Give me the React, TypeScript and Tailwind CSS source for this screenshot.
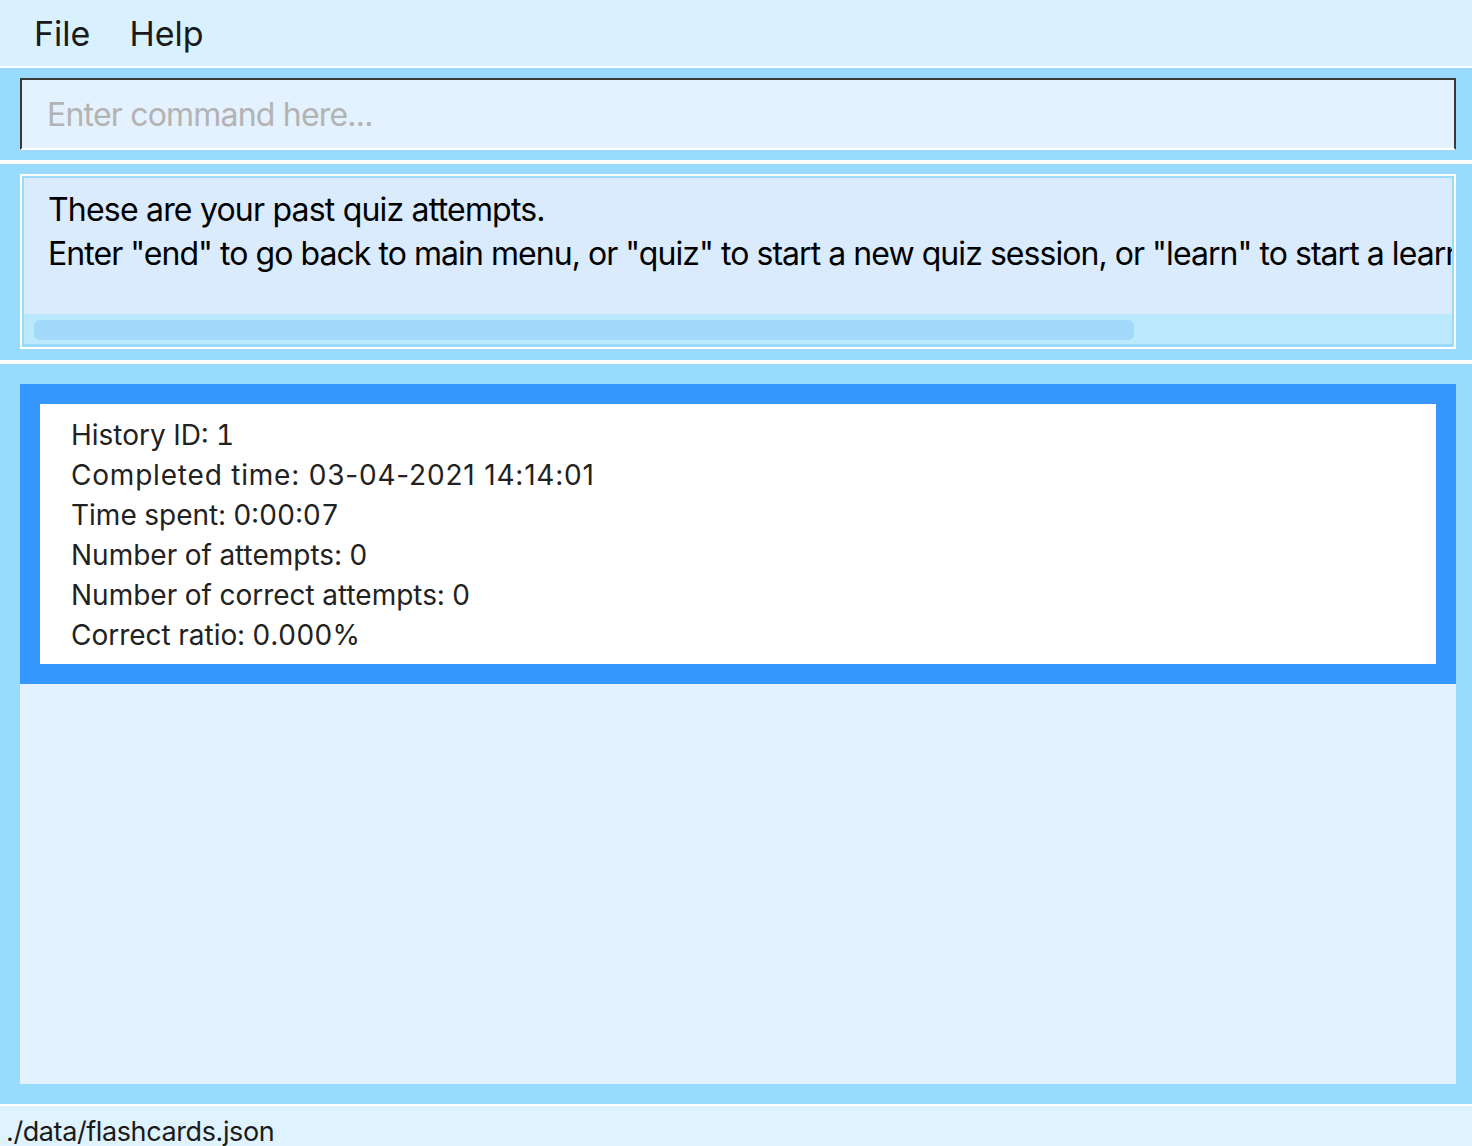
import React from 'react';

const font = { fontFamily: 'Inter, "Noto Sans", sans-serif' };

const history = [
  'History ID: 1',
  'Completed time: 03-04-2021 14:14:01',
  'Time spent: 0:00:07',
  'Number of attempts: 0',
  'Number of correct attempts: 0',
  'Correct ratio: 0.000%',
];

function MenuBar() {
  return (
    <div className="flex h-[66px] items-center bg-[#d9f0ff] text-[34px] text-[#1a1a1a]">
      <span className="ml-[34px]">File</span>
      <span className="ml-[39px]">Help</span>
    </div>
  );
}

function CommandBox() {
  return (
    <div className="bg-[#99dbfd] pb-[10px] pl-[20px] pr-[16px] pt-[10px]">
      <input
        readOnly
        placeholder="Enter command here..."
        className="block h-[72px] w-full border-2 border-[#3a3a3a] border-b-white bg-[#e3f2fe] pl-[25px] text-[32px] tracking-[-0.8px] outline-none placeholder:text-[#b3b3b3]"
      />
    </div>
  );
}

function ResultDisplay() {
  return (
    <div className="bg-[#99dbfd] pb-[11px] pl-[20px] pr-[16px] pt-[10px]">
      <div className="border-2 border-white p-[2px] pb-[3px]">
        <div className="flex flex-col overflow-hidden rounded-b-[3px] bg-[#d9ebfc]">
          <div className="h-[136px] overflow-hidden whitespace-nowrap pl-[24px] pt-[10px] text-[32px] leading-[44px] text-black">
            <div className="tracking-[-0.8px]">These are your past quiz attempts.</div>
            <div className="tracking-[-0.95px]">
              Enter "end" to go back to main menu, or "quiz" to start a new quiz session, or "learn" to start a learn session.
            </div>
          </div>
          <div className="h-[30px] bg-[#bbeaff] pl-[10px] pt-[6px]">
            <div className="h-[20px] w-[1100px] rounded-[6px] bg-[#a3dafc]" />
          </div>
        </div>
      </div>
    </div>
  );
}

function HistoryCard() {
  return (
    <div className="bg-[#3596fe] p-[20px]">
      <div className="h-[260px] bg-white pl-[31px] pt-[11px] text-[28px] leading-[40px] text-[#222]">
        {history.map((line, i) => (
          <div key={line} className={i === 1 ? 'tracking-[0.8px]' : 'tabular-nums'}>
            {line}
          </div>
        ))}
      </div>
    </div>
  );
}

export default function App() {
  return (
    <div className="flex h-[1146px] w-[1472px] flex-col overflow-hidden bg-white" style={font}>
      <MenuBar />
      <div className="h-[2px] bg-white" />
      <CommandBox />
      <div className="h-[4px] bg-white" />
      <ResultDisplay />
      <div className="h-[4px] bg-white" />
      <div className="flex flex-1 flex-col bg-[#99dbfd] pb-[20px] pl-[20px] pr-[16px] pt-[20px]">
        <div className="flex-1 bg-[#e3f2fe]">
          <HistoryCard />
        </div>
      </div>
      <div className="h-[2px] bg-white" />
      <div className="h-[40px] overflow-hidden bg-[#dff3fe] pl-[6px] pt-[10px] text-[27px] leading-[32px] tracking-[-0.4px] text-[#1a1a1a]">
        ./data/flashcards.json
      </div>
    </div>
  );
}
